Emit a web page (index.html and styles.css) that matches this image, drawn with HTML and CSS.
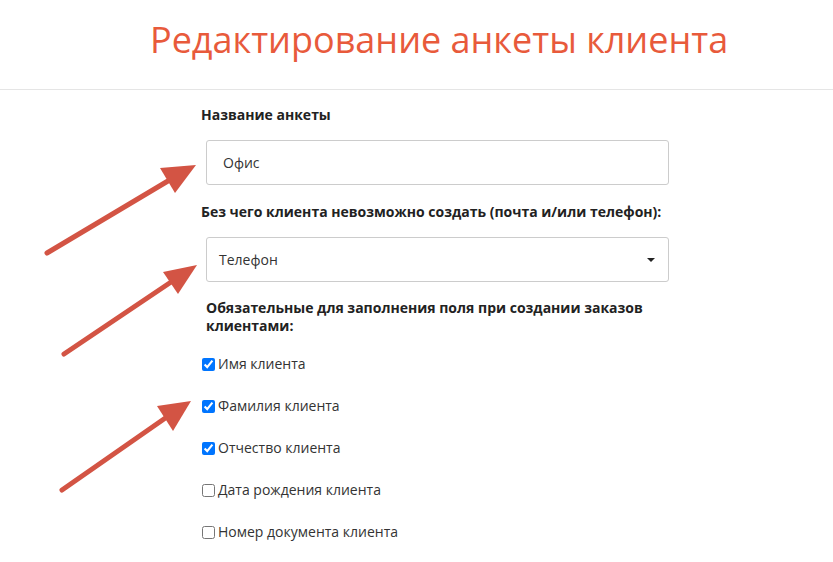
FILE: index.html
```html
<!DOCTYPE html>
<html lang="ru">
	<head>
		<meta charset="UTF-8">
		<title>Редактирование анкеты клиента</title>
		<link rel="stylesheet" href="styles.css">
	</head>
	<body>
		<header class="page-header">
			<h1 class="page-title">Редактирование анкеты клиента</h1>
		</header>
		<div class="main-content">
			<form class="profile-form">
				<div class="form-group">
					<label class="form-label">Название анкеты</label>
					<div class="form-control">Офис</div>
				</div>
				<div class="form-group">
					<label class="form-label">Без чего клиента невозможно создать (почта и/или телефон):</label>
					<div class="form-control form-select">
						Телефон
						<span class="select-caret"></span>
					</div>
				</div>
				<div class="form-group">
					<label class="form-label form-label-indent">Обязательные для заполнения поля при создании заказов клиентами:</label>
					<div class="check-list">
						<label class="check-row"><input type="checkbox" checked> Имя клиента</label>
						<label class="check-row"><input type="checkbox" checked> Фамилия клиента</label>
						<label class="check-row"><input type="checkbox" checked> Отчество клиента</label>
						<label class="check-row"><input type="checkbox"> Дата рождения клиента</label>
						<label class="check-row"><input type="checkbox"> Номер документа клиента</label>
					</div>
				</div>
			</form>
		</div>
		<svg class="arrows" width="833" height="562" viewBox="0 0 833 562">
			<g stroke="#d35444" stroke-width="5" stroke-linecap="round" fill="none">
				<line x1="47" y1="253" x2="178" y2="175"/>
				<line x1="64" y1="354" x2="180" y2="276"/>
				<line x1="62" y1="490" x2="174" y2="412"/>
			</g>
			<g fill="#d35444">
				<polygon points="196,165 160,168 175,193"/>
				<polygon points="197,265 163,272 178,294"/>
				<polygon points="191,401 157,406 173,431"/>
			</g>
		</svg>
	</body>
</html>
```

FILE: styles.css
```css
*, *::before, *::after {
	box-sizing: border-box;
}

html, body {
	margin: 0;
	padding: 0;
}

body {
	position: relative;
	background: #fff;
	color: #333;
	font-family: "Open Sans", "Noto Sans", sans-serif;
	font-size: 14px;
}

.page-header {
	height: 90px;
	border-bottom: 1px solid #e5e5e5;
	padding-left: 150px;
}

.page-title {
	margin: 0;
	padding-top: 15px;
	font-size: 36px;
	line-height: 50px;
	font-weight: 400;
	color: #e85a3b;
}

.main-content {
	padding-left: 201px;
}

.profile-form {
	width: 468px;
	padding-top: 15px;
}

.form-group {
	margin-bottom: 17px;
}

.form-label {
	display: block;
	font-weight: 700;
	line-height: 20px;
	color: #222;
	margin-bottom: 15px;
}

.form-label-indent {
	padding-left: 5px;
	line-height: 18px;
	margin-bottom: 16px;
}

.form-control {
	position: relative;
	margin-left: 5px;
	height: 45px;
	border: 1px solid #ccc;
	border-radius: 3px;
	padding: 0 16px;
	display: flex;
	align-items: center;
	color: #333;
}

.form-select {
	padding-left: 12px;
}

.select-caret {
	position: absolute;
	right: 13px;
	top: 20px;
	border-left: 4px solid transparent;
	border-right: 4px solid transparent;
	border-top: 4px solid #222;
}

.check-list {
	display: flex;
	flex-direction: column;
	gap: 22px;
	padding-top: 3px;
}

.check-row {
	display: flex;
	align-items: center;
	gap: 3px;
	line-height: 20px;
	margin-left: 1px;
}

.check-row > input {
	margin: 0;
	width: 13px;
	height: 13px;
}

.arrows {
	position: absolute;
	left: 0;
	top: 0;
	pointer-events: none;
}
```
